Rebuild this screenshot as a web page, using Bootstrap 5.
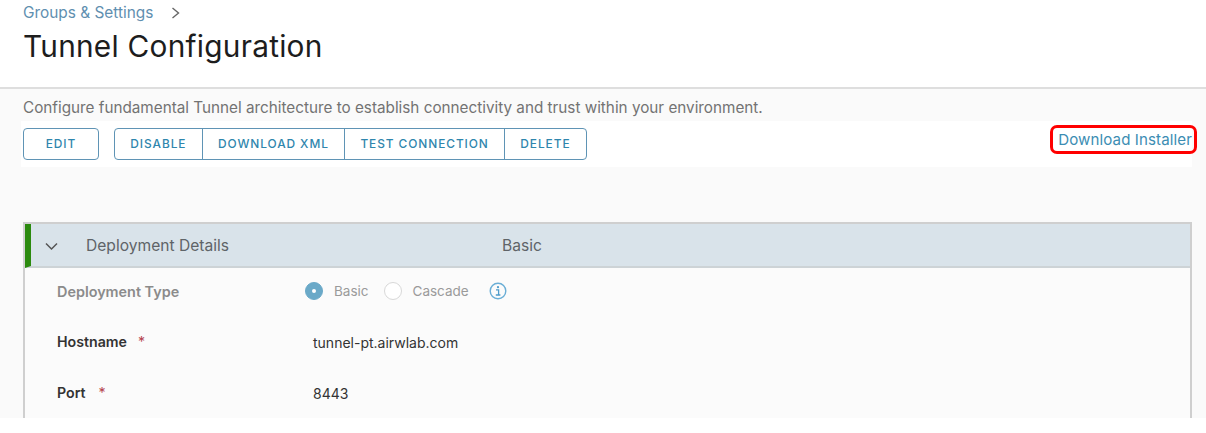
<!DOCTYPE html>
<html lang="en"><head><meta charset="utf-8"><title>Tunnel Configuration</title>
<link href="https://cdn.jsdelivr.net/npm/bootstrap@5.3.0/dist/css/bootstrap.min.css" rel="stylesheet">
<style>
html,body{height:433px;overflow:hidden;background:#fff}
body{font-family:Inter,"Liberation Sans",sans-serif;color:#3a3a3a;width:1206px}
.page-head{height:87px;padding:4px 0 0 23px}
.crumb{font-size:15.4px;line-height:18px;color:#5f8fb0;text-decoration:none}
.crumb-row{gap:18px}
.page-title{font-size:29.8px;font-weight:400;line-height:36px;margin:6px 0 0;color:#1d1d1d;letter-spacing:.25px}
.main-area{border-top:2px solid #dedede;background:#fafafa;height:331px;padding:0 14px 0 23px}
.intro{font-size:15.28px;line-height:20px;color:#737373;padding-top:9px;height:32px;margin:0}
.tool-strip{background:#fff;height:46px;margin-left:-2px;padding:7px 0 0 2px}
.tool-btn{--bs-btn-color:#2f86ad;--bs-btn-border-color:#5f94b5;--bs-btn-hover-color:#2f86ad;--bs-btn-hover-bg:#eef5f9;--bs-btn-hover-border-color:#5f94b5;--bs-btn-font-size:11.9px;--bs-btn-font-weight:500;--bs-btn-padding-y:0;--bs-btn-padding-x:15.3px;--bs-btn-border-radius:4px;height:32px;line-height:30px;letter-spacing:.93px;white-space:nowrap}
.btn-edit{width:76px;margin-right:15px;padding:0}
.install-link{font-size:15.1px;line-height:23px;height:29px;color:#3c8db3;text-decoration:none;border:3px solid #f00;border-radius:7px;padding:0 2px 0 5px;margin:-3px -5px 0 0;letter-spacing:.1px}
.panel-box{margin-top:55px;border:2px solid #cfcfcf;border-bottom:0;background:#fbfbfb;height:196px}
.panel-bar{height:44px;background:#d9e3ea;border-bottom:2px solid #cdd3d6;border-left:6px solid #2b8a0e;font-size:15.6px;color:#5f6468;padding-top:2px}
.bar-chevron{width:15px;margin-left:13px}
.bar-name{width:416px;margin-left:27px}
.form-line{height:51px;font-size:14px;padding-left:32px}
.form-line.first{height:46px;font-size:13.5px}
.form-line.first .field-name{font-size:14.4px;padding-top:2px;width:248px}
.field-name{width:247px;font-weight:600;color:#333;font-size:14.2px;padding-top:5px}
.first .field-name{color:#8b8b8b}
.req{color:#b5434f;font-weight:400;margin-left:11px}
.port-req{margin-left:13px}
.field-value{color:#333;padding-left:9px;padding-top:5px}
.radio-dot{width:18px;height:18px;border-radius:50%;border:1px solid #d8d8d8;background:#fff;flex:none}
.radio-dot.on{background:#6aa9c8;border-color:#6aa9c8;display:flex;align-items:center;justify-content:center}
.radio-dot.on::after{content:"";width:4px;height:4px;border-radius:50%;background:#fff}
.radio-label{color:#9a9a9a;margin-left:11px;margin-right:15px}
.info-glyph{margin-left:5px}
.bottom-white{height:15px;background:#fff}
</style></head>
<body>
<header class="page-head">
  <div class="d-flex align-items-center crumb-row">
    <a class="crumb" href="#">Groups &amp; Settings</a>
    <svg width="9" height="14" viewBox="0 0 9 14" aria-hidden="true"><path d="M1.5 2l6 5-6 5" fill="none" stroke="#666" stroke-width="1.4"/></svg>
  </div>
  <h1 class="page-title">Tunnel Configuration</h1>
</header>
<main class="main-area">
  <p class="intro">Configure fundamental Tunnel architecture to establish connectivity and trust within your environment.</p>
  <div class="tool-strip d-flex align-items-start justify-content-between">
    <div class="d-flex">
      <button type="button" class="btn btn-outline-secondary tool-btn btn-edit">EDIT</button>
      <div class="btn-group">
        <button type="button" class="btn btn-outline-secondary tool-btn">DISABLE</button>
        <button type="button" class="btn btn-outline-secondary tool-btn">DOWNLOAD XML</button>
        <button type="button" class="btn btn-outline-secondary tool-btn">TEST CONNECTION</button>
        <button type="button" class="btn btn-outline-secondary tool-btn">DELETE</button>
      </div>
    </div>
    <a class="install-link" href="#">Download Installer</a>
  </div>
  <section class="panel-box">
    <div class="panel-bar d-flex align-items-center">
      <svg class="bar-chevron" height="9" viewBox="0 0 15 9" aria-hidden="true"><path d="M2 1.5l5.5 5.5L13 1.5" fill="none" stroke="#555" stroke-width="1.5"/></svg>
      <span class="bar-name">Deployment Details</span>
      <span>Basic</span>
    </div>
    <div class="form-line first d-flex align-items-center">
      <span class="field-name">Deployment Type</span>
      <span class="radio-dot on"></span><span class="radio-label">Basic</span>
      <span class="radio-dot"></span><span class="radio-label">Cascade</span>
      <svg width="18" height="18" viewBox="0 0 18 18" class="info-glyph" aria-hidden="true"><circle cx="9" cy="9" r="7.8" fill="none" stroke="#6aaed6" stroke-width="1.4"/><circle cx="9" cy="5.2" r="1.1" fill="#4d9ccb"/><path d="M7 7.8h2.6v5M6.8 13h4.6" fill="none" stroke="#4d9ccb" stroke-width="1.3"/></svg>
    </div>
    <div class="form-line d-flex align-items-center">
      <span class="field-name">Hostname<span class="req">*</span></span>
      <span class="field-value">tunnel-pt.airwlab.com</span>
    </div>
    <div class="form-line d-flex align-items-center">
      <span class="field-name">Port<span class="req port-req">*</span></span>
      <span class="field-value">8443</span>
    </div>
  </section>
</main>
<div class="bottom-white"></div>
<script src="https://cdn.jsdelivr.net/npm/bootstrap@5.3.0/dist/js/bootstrap.bundle.min.js"></script>
</body></html>
